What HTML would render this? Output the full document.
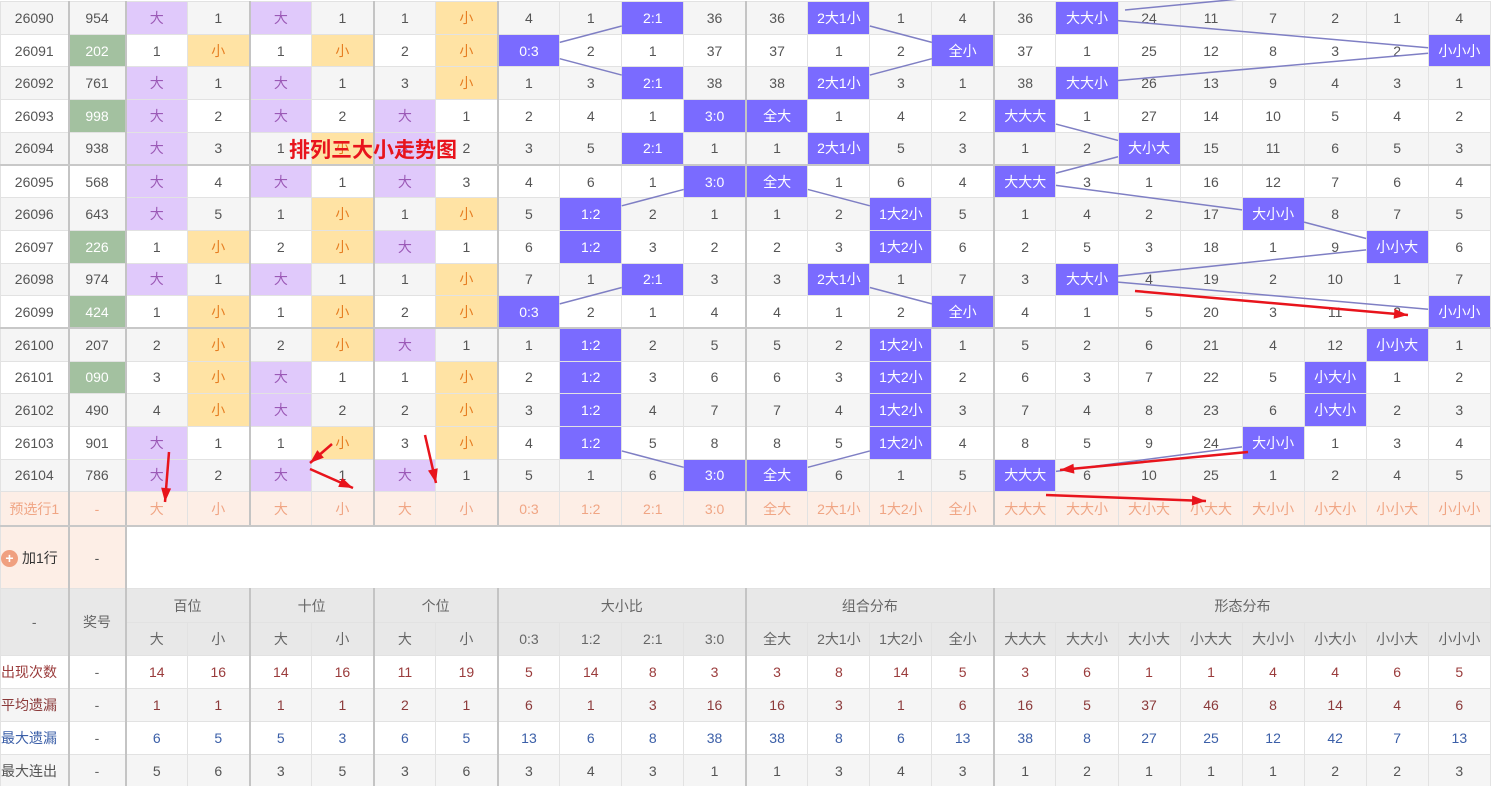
<!DOCTYPE html>
<html><head><meta charset="utf-8"><style>
html,body{margin:0;padding:0;background:#fff;width:1493px;height:786px;overflow:hidden}
body{font-family:"Liberation Sans","Noto Sans CJK SC",sans-serif;font-size:14px;color:#555;position:relative}
table{border-collapse:collapse;table-layout:fixed;width:1491px;position:absolute;left:0;top:1px}
td{text-align:center;padding:0;border:1px solid #e2e2e2;white-space:nowrap;overflow:hidden}
tr.d{height:32.7px}
tr.d:nth-child(odd) td{background:#f5f5f5}
tr.d td.p{background:#e0c9fb;color:#9b59b6}
tr.d td.y{background:#ffe3a4;color:#e67e22}
tr.d td.g{background:#a3c1a0;color:#fff}
tr.d td.b{background:#7a6bff;color:#fff}
tr.s td{border-bottom:2px solid #c8c8c8}
tr.pre{height:34px}
tr.pre td{background:#fdeee6;color:#f0a584;border-bottom:2px solid #c8c8c8}
tr.add{height:63px}
tr.h td{background:#e8e8e8;color:#666}
tr.h1{height:34px} tr.h2{height:33px}
tr.st{height:33px}
tr.st.gr td{background:#f5f5f5}
tr.c1 td{color:#9a3b3b} tr.c2 td{color:#8b3a3a} tr.c3 td{color:#3b5fa8} tr.c4 td{color:#555}
tr.st td:nth-child(2){color:#666}
tr.st td:first-child{text-align:left}
col.G{border-left:2px solid #c4c4c4}
#t{position:absolute;left:289px;top:134px;font-weight:bold;font-size:21px;color:#e8141c;font-family:"Liberation Sans","Noto Sans CJK SC",sans-serif}
svg{position:absolute;left:0;top:0}
</style></head><body>
<table id="tb">
<colgroup><col style="width:68px"><col class="G" style="width:57px">
<col class="G"><col><col class="G"><col><col class="G"><col>
<col class="G"><col><col><col>
<col class="G"><col><col><col>
<col class="G"><col><col><col><col><col><col><col></colgroup>
<tr class="d"><td>26090</td><td>954</td><td class="p">大</td><td>1</td><td class="p">大</td><td>1</td><td>1</td><td class="y">小</td><td>4</td><td>1</td><td class="b">2:1</td><td>36</td><td>36</td><td class="b">2大1小</td><td>1</td><td>4</td><td>36</td><td class="b">大大小</td><td>24</td><td>11</td><td>7</td><td>2</td><td>1</td><td>4</td></tr>
<tr class="d"><td>26091</td><td class="g">202</td><td>1</td><td class="y">小</td><td>1</td><td class="y">小</td><td>2</td><td class="y">小</td><td class="b">0:3</td><td>2</td><td>1</td><td>37</td><td>37</td><td>1</td><td>2</td><td class="b">全小</td><td>37</td><td>1</td><td>25</td><td>12</td><td>8</td><td>3</td><td>2</td><td class="b">小小小</td></tr>
<tr class="d"><td>26092</td><td>761</td><td class="p">大</td><td>1</td><td class="p">大</td><td>1</td><td>3</td><td class="y">小</td><td>1</td><td>3</td><td class="b">2:1</td><td>38</td><td>38</td><td class="b">2大1小</td><td>3</td><td>1</td><td>38</td><td class="b">大大小</td><td>26</td><td>13</td><td>9</td><td>4</td><td>3</td><td>1</td></tr>
<tr class="d"><td>26093</td><td class="g">998</td><td class="p">大</td><td>2</td><td class="p">大</td><td>2</td><td class="p">大</td><td>1</td><td>2</td><td>4</td><td>1</td><td class="b">3:0</td><td class="b">全大</td><td>1</td><td>4</td><td>2</td><td class="b">大大大</td><td>1</td><td>27</td><td>14</td><td>10</td><td>5</td><td>4</td><td>2</td></tr>
<tr class="d s"><td>26094</td><td>938</td><td class="p">大</td><td>3</td><td>1</td><td class="y">小</td><td class="p">大</td><td>2</td><td>3</td><td>5</td><td class="b">2:1</td><td>1</td><td>1</td><td class="b">2大1小</td><td>5</td><td>3</td><td>1</td><td>2</td><td class="b">大小大</td><td>15</td><td>11</td><td>6</td><td>5</td><td>3</td></tr>
<tr class="d"><td>26095</td><td>568</td><td class="p">大</td><td>4</td><td class="p">大</td><td>1</td><td class="p">大</td><td>3</td><td>4</td><td>6</td><td>1</td><td class="b">3:0</td><td class="b">全大</td><td>1</td><td>6</td><td>4</td><td class="b">大大大</td><td>3</td><td>1</td><td>16</td><td>12</td><td>7</td><td>6</td><td>4</td></tr>
<tr class="d"><td>26096</td><td>643</td><td class="p">大</td><td>5</td><td>1</td><td class="y">小</td><td>1</td><td class="y">小</td><td>5</td><td class="b">1:2</td><td>2</td><td>1</td><td>1</td><td>2</td><td class="b">1大2小</td><td>5</td><td>1</td><td>4</td><td>2</td><td>17</td><td class="b">大小小</td><td>8</td><td>7</td><td>5</td></tr>
<tr class="d"><td>26097</td><td class="g">226</td><td>1</td><td class="y">小</td><td>2</td><td class="y">小</td><td class="p">大</td><td>1</td><td>6</td><td class="b">1:2</td><td>3</td><td>2</td><td>2</td><td>3</td><td class="b">1大2小</td><td>6</td><td>2</td><td>5</td><td>3</td><td>18</td><td>1</td><td>9</td><td class="b">小小大</td><td>6</td></tr>
<tr class="d"><td>26098</td><td>974</td><td class="p">大</td><td>1</td><td class="p">大</td><td>1</td><td>1</td><td class="y">小</td><td>7</td><td>1</td><td class="b">2:1</td><td>3</td><td>3</td><td class="b">2大1小</td><td>1</td><td>7</td><td>3</td><td class="b">大大小</td><td>4</td><td>19</td><td>2</td><td>10</td><td>1</td><td>7</td></tr>
<tr class="d s"><td>26099</td><td class="g">424</td><td>1</td><td class="y">小</td><td>1</td><td class="y">小</td><td>2</td><td class="y">小</td><td class="b">0:3</td><td>2</td><td>1</td><td>4</td><td>4</td><td>1</td><td>2</td><td class="b">全小</td><td>4</td><td>1</td><td>5</td><td>20</td><td>3</td><td>11</td><td>2</td><td class="b">小小小</td></tr>
<tr class="d"><td>26100</td><td>207</td><td>2</td><td class="y">小</td><td>2</td><td class="y">小</td><td class="p">大</td><td>1</td><td>1</td><td class="b">1:2</td><td>2</td><td>5</td><td>5</td><td>2</td><td class="b">1大2小</td><td>1</td><td>5</td><td>2</td><td>6</td><td>21</td><td>4</td><td>12</td><td class="b">小小大</td><td>1</td></tr>
<tr class="d"><td>26101</td><td class="g">090</td><td>3</td><td class="y">小</td><td class="p">大</td><td>1</td><td>1</td><td class="y">小</td><td>2</td><td class="b">1:2</td><td>3</td><td>6</td><td>6</td><td>3</td><td class="b">1大2小</td><td>2</td><td>6</td><td>3</td><td>7</td><td>22</td><td>5</td><td class="b">小大小</td><td>1</td><td>2</td></tr>
<tr class="d"><td>26102</td><td>490</td><td>4</td><td class="y">小</td><td class="p">大</td><td>2</td><td>2</td><td class="y">小</td><td>3</td><td class="b">1:2</td><td>4</td><td>7</td><td>7</td><td>4</td><td class="b">1大2小</td><td>3</td><td>7</td><td>4</td><td>8</td><td>23</td><td>6</td><td class="b">小大小</td><td>2</td><td>3</td></tr>
<tr class="d"><td>26103</td><td>901</td><td class="p">大</td><td>1</td><td>1</td><td class="y">小</td><td>3</td><td class="y">小</td><td>4</td><td class="b">1:2</td><td>5</td><td>8</td><td>8</td><td>5</td><td class="b">1大2小</td><td>4</td><td>8</td><td>5</td><td>9</td><td>24</td><td class="b">大小小</td><td>1</td><td>3</td><td>4</td></tr>
<tr class="d"><td>26104</td><td>786</td><td class="p">大</td><td>2</td><td class="p">大</td><td>1</td><td class="p">大</td><td>1</td><td>5</td><td>1</td><td>6</td><td class="b">3:0</td><td class="b">全大</td><td>6</td><td>1</td><td>5</td><td class="b">大大大</td><td>6</td><td>10</td><td>25</td><td>1</td><td>2</td><td>4</td><td>5</td></tr>
<tr class="pre"><td>预选行1</td><td>-</td><td>大</td><td>小</td><td>大</td><td>小</td><td>大</td><td>小</td><td>0:3</td><td>1:2</td><td>2:1</td><td>3:0</td><td>全大</td><td>2大1小</td><td>1大2小</td><td>全小</td><td>大大大</td><td>大大小</td><td>大小大</td><td>小大大</td><td>大小小</td><td>小大小</td><td>小小大</td><td>小小小</td></tr>
<tr class="add"><td style="background:#fdeee6;color:#333;text-align:left"><span style="display:inline-block;width:17px;height:17px;border-radius:50%;background:#f0a080;color:#fff;font-weight:bold;line-height:17px;text-align:center;vertical-align:middle;margin-right:4px">+</span>加1行</td><td style="background:#fdeee6">-</td><td colspan="22"></td></tr>
<tr class="h h1"><td rowspan="2">-</td><td rowspan="2">奖号</td><td colspan="2">百位</td><td colspan="2">十位</td><td colspan="2">个位</td><td colspan="4">大小比</td><td colspan="4">组合分布</td><td colspan="8">形态分布</td></tr>
<tr class="h h2"><td>大</td><td>小</td><td>大</td><td>小</td><td>大</td><td>小</td><td>0:3</td><td>1:2</td><td>2:1</td><td>3:0</td><td>全大</td><td>2大1小</td><td>1大2小</td><td>全小</td><td>大大大</td><td>大大小</td><td>大小大</td><td>小大大</td><td>大小小</td><td>小大小</td><td>小小大</td><td>小小小</td></tr>
<tr class="st c1"><td>出现次数</td><td>-</td><td>14</td><td>16</td><td>14</td><td>16</td><td>11</td><td>19</td><td>5</td><td>14</td><td>8</td><td>3</td><td>3</td><td>8</td><td>14</td><td>5</td><td>3</td><td>6</td><td>1</td><td>1</td><td>4</td><td>4</td><td>6</td><td>5</td></tr>
<tr class="st c2 gr"><td>平均遗漏</td><td>-</td><td>1</td><td>1</td><td>1</td><td>1</td><td>2</td><td>1</td><td>6</td><td>1</td><td>3</td><td>16</td><td>16</td><td>3</td><td>1</td><td>6</td><td>16</td><td>5</td><td>37</td><td>46</td><td>8</td><td>14</td><td>4</td><td>6</td></tr>
<tr class="st c3"><td>最大遗漏</td><td>-</td><td>6</td><td>5</td><td>5</td><td>3</td><td>6</td><td>5</td><td>13</td><td>6</td><td>8</td><td>38</td><td>38</td><td>8</td><td>6</td><td>13</td><td>38</td><td>8</td><td>27</td><td>25</td><td>12</td><td>42</td><td>7</td><td>13</td></tr>
<tr class="st c4 gr" style="height:32px"><td>最大连出</td><td>-</td><td>5</td><td>6</td><td>3</td><td>5</td><td>3</td><td>6</td><td>3</td><td>4</td><td>3</td><td>1</td><td>1</td><td>3</td><td>4</td><td>3</td><td>1</td><td>2</td><td>1</td><td>1</td><td>1</td><td>2</td><td>2</td><td>3</td></tr>
</table>
<svg id="sv" width="1493" height="786"></svg>
<div id="t">排列三大小走势图</div>
<script>
(function(){
var sv=document.getElementById('sv'),NS='http://www.w3.org/2000/svg';
var rows=document.querySelectorAll('tr.d');
var groups=[[8,11],[12,15],[16,23]];
function clip(c,r,dx,dy){var hw=r.width/2,hh=r.height/2;var t=Math.min(dx?hw/Math.abs(dx):1e9,dy?hh/Math.abs(dy):1e9);return [c[0]+dx*t,c[1]+dy*t];}
function line(x1,y1,x2,y2,col,w){var l=document.createElementNS(NS,'line');l.setAttribute('x1',x1);l.setAttribute('y1',y1);l.setAttribute('x2',x2);l.setAttribute('y2',y2);l.setAttribute('stroke',col);l.setAttribute('stroke-width',w);sv.appendChild(l);}
groups.forEach(function(g){var pts=[];
rows.forEach(function(tr){for(var i=g[0];i<=g[1];i++){var td=tr.children[i];if(td.classList.contains('b')){pts.push(td.getBoundingClientRect());}}});
for(var k=0;k<pts.length-1;k++){var a=pts[k],b=pts[k+1];var ca=[a.left+a.width/2,a.top+a.height/2],cb=[b.left+b.width/2,b.top+b.height/2];
var dx=cb[0]-ca[0],dy=cb[1]-ca[1];var p1=clip(ca,a,dx,dy),p2=clip(cb,b,-dx,-dy);line(p1[0],p1[1],p2[0],p2[1],'#7f7fc4',1.5);}
});
line(1125,10,1250,-2,'#7f7fc4',1.5);
function arrow(x1,y1,x2,y2){line(x1,y1,x2,y2,'#e8141c',2.5);var a=Math.atan2(y2-y1,x2-x1),L=14,W=5;
var bx=x2-L*Math.cos(a),by=y2-L*Math.sin(a);var p=document.createElementNS(NS,'polygon');
p.setAttribute('points',x2+','+y2+' '+(bx-W*Math.sin(a))+','+(by+W*Math.cos(a))+' '+(bx+W*Math.sin(a))+','+(by-W*Math.cos(a)));p.setAttribute('fill','#e8141c');sv.appendChild(p);}
arrow(169,452,165,502);arrow(332,444,310,463);arrow(310,469,353,488);arrow(425,435,436,483);
arrow(1135,291,1408,315);arrow(1248,452,1060,470);arrow(1046,495,1206,501);
})();
</script>
</body></html>
